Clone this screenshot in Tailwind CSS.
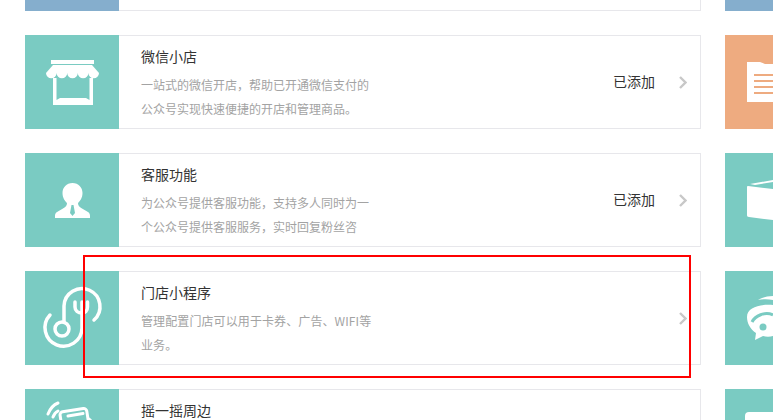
<!DOCTYPE html>
<html lang="zh-CN">
<head>
<meta charset="UTF-8" />
<title>添加功能插件</title>
<script src="https://cdn.jsdelivr.net/npm/@tailwindcss/browser@4"></script>
</head>
<body class="bg-white font-['Noto_Sans_CJK_SC','Noto_Sans',sans-serif]">
<div class="relative w-[773px] h-[420px] overflow-hidden">
  <div class="flex gap-[24px] pl-[25px] -mt-[83px] w-[1400px]">

    <!-- left column -->
    <div class="w-[676px] shrink-0 flex flex-col gap-[24px]">
      <div class="flex h-[94px]">
        <div class="w-[94px] shrink-0 bg-[#85aecd]"></div>
        <div class="flex-1 border border-l-0 border-[#e7e7eb]"></div>
      </div>

      <div class="flex h-[94px]">
        <div class="w-[94px] shrink-0 bg-[#7acbc2]">
          <svg width="94" height="94" viewBox="0 0 94 94" fill="#fff">
            <rect x="26" y="25" width="43" height="4" />
            <path d="M28 30H67L74 38A5.300 5.300 0 0 1 63.400 38A5.300 5.300 0 0 1 52.800 38A5.300 5.300 0 0 1 42.200 38A5.300 5.300 0 0 1 31.600 38A5.300 5.300 0 0 1 21 38Z" />
            <path d="M28 43H31.500V65L35 63H61L64.500 65V43H68V70H28Z" />
          </svg>
        </div>
        <div class="flex-1 flex justify-between items-center border border-l-0 border-[#e7e7eb] pl-[22px] pr-[13px]">
          <div class="self-start pt-[8px] w-[234px]">
            <h3 class="text-[14px] leading-[24px] text-[#333] font-normal">微信小店</h3>
            <p class="mt-[5px] text-[12px] leading-[24px] text-[#a3a3a3]">一站式的微信开店，帮助已开通微信支付的公众号实现快速便捷的开店和管理商品。</p>
          </div>
          <div class="flex items-center gap-[24px]">
            <span class="text-[14px] leading-[24px] text-[#333] -mt-[2px]">已添加</span>
            <svg width="8" height="13" viewBox="0 0 8 13" fill="none" stroke="#c8c8c8" stroke-width="2.4"><path d="M1 1L6.500 6.500L1 12" /></svg>
          </div>
        </div>
      </div>

      <div class="flex h-[94px]">
        <div class="w-[94px] shrink-0 bg-[#7acbc2]">
          <svg width="94" height="94" viewBox="0 0 94 94">
            <path fill="#fff" d="M47.500 30C53.500 30 57.500 34.500 57.500 40C57.500 45 55 48 53 50C53 52 54 54 57 55.500L63 59C64.500 60 65 61 65 63V65H30V63C30 61 30.500 60 32 59L38 55.500C41 54 42 52 42 50C40 48 37.500 45 37.500 40C37.500 34.500 41.500 30 47.500 30Z" />
            <path fill="#7acbc2" d="M46.500 52H48.500L50 60L47.500 63L45 60Z" />
          </svg>
        </div>
        <div class="flex-1 flex justify-between items-center border border-l-0 border-[#e7e7eb] pl-[22px] pr-[13px]">
          <div class="self-start pt-[8px] w-[234px]">
            <h3 class="text-[14px] leading-[24px] text-[#333] font-normal">客服功能</h3>
            <p class="mt-[5px] text-[12px] leading-[24px] text-[#a3a3a3]">为公众号提供客服功能，支持多人同时为一个公众号提供客服服务，实时回复粉丝咨</p>
          </div>
          <div class="flex items-center gap-[24px]">
            <span class="text-[14px] leading-[24px] text-[#333] -mt-[2px]">已添加</span>
            <svg width="8" height="13" viewBox="0 0 8 13" fill="none" stroke="#c8c8c8" stroke-width="2.4"><path d="M1 1L6.500 6.500L1 12" /></svg>
          </div>
        </div>
      </div>

      <div class="flex h-[94px]">
        <div class="w-[94px] shrink-0 bg-[#7acbc2]">
          <svg width="94" height="94" viewBox="0 0 94 94" fill="none" stroke="#fff" stroke-width="3.500" stroke-linecap="round">
            <path d="M69 49A18 18 0 1 0 39 35V50" />
            <circle cx="37" cy="58" r="7" />
            <path d="M25 44A18.500 18.500 0 1 0 57 57V31" />
            <path d="M50 31V36C50 40 53 42 57 42C60 42 62.500 40 62.500 36V31" />
          </svg>
        </div>
        <div class="flex-1 flex justify-between items-center border border-l-0 border-[#e7e7eb] pl-[22px] pr-[13px]">
          <div class="self-start pt-[8px] w-[234px]">
            <h3 class="text-[14px] leading-[24px] text-[#333] font-normal">门店小程序</h3>
            <p class="mt-[5px] text-[12px] leading-[24px] tracking-[0.1px] text-[#a3a3a3]">管理配置门店可以用于卡券、广告、WIFI等业务。</p>
          </div>
          <svg width="8" height="13" viewBox="0 0 8 13" fill="none" stroke="#c8c8c8" stroke-width="2.4"><path d="M1 1L6.500 6.500L1 12" /></svg>
        </div>
      </div>

      <div class="flex h-[94px]">
        <div class="w-[94px] shrink-0 bg-[#7acbc2]">
          <svg width="94" height="94" viewBox="0 0 94 94" fill="none" stroke="#fff" stroke-width="3" stroke-linecap="round">
            <path d="M23 25C25 20 28 16 33 14" />
            <path d="M28 28C29 25 31 23 33 22" />
            <rect x="36" y="21" width="27" height="20" rx="3" transform="rotate(-9 50 31)" />
            <path d="M43 27L58 24.500" />
            <path d="M64 30L67 33" />
          </svg>
        </div>
        <div class="flex-1 border border-l-0 border-[#e7e7eb] pl-[22px] pt-[8px]">
          <h3 class="text-[14px] leading-[24px] text-[#333] font-normal">摇一摇周边</h3>
        </div>
      </div>
    </div>

    <!-- right column, cut off by the window -->
    <div class="w-[94px] shrink-0 flex flex-col gap-[24px]">
      <div class="h-[94px] bg-[#85aecd]"></div>

      <div class="h-[94px] bg-[#eeab80]">
        <svg width="48" height="94" viewBox="0 0 48 94">
          <path fill="#fff" d="M22 27H35L40 29H48V67H22Z" />
          <path fill="#eeab80" d="M29 39H48V41H29ZM29 45H48V47H29ZM29 51H48V53H29ZM29 57H48V59H29Z" />
        </svg>
      </div>

      <div class="h-[94px] bg-[#7acbc2]">
        <svg width="48" height="94" viewBox="0 0 48 94" fill="#fff">
          <path d="M25 31L48 27V29L30 32Z" />
          <path d="M23 33L48 36V67L24 64C22.500 64 22 63 22 62V34C22 33.500 22.500 33 23 33Z" />
        </svg>
      </div>

      <div class="h-[94px] bg-[#7acbc2]">
        <svg width="48" height="94" viewBox="0 0 48 94">
          <path fill="#fff" d="M33 29C37 26.500 42 25 48 25V29C43 28 38 28 33 29Z" />
          <path fill="#fff" d="M48 34C36 33 22 36 22 46C22 52 25 58 31 62L30 69L38 65C41 66 45 66 48 65Z" />
          <path fill="none" stroke="#7acbc2" stroke-width="3" d="M27 51C30 45 40 40 48 44" />
          <circle cx="38" cy="56" r="3.500" fill="#7acbc2" />
        </svg>
      </div>

      <div class="h-[94px] bg-[#7acbc2] pl-[20px] pt-[23px]">
        <div class="w-[60px] h-[40px] bg-white rounded-[4px]"></div>
      </div>
    </div>
  </div>

  <!-- annotation drawn over the screenshot -->
  <div class="absolute left-[83px] top-[255px] w-[608px] h-[123px] border-2 border-[#ff0000]"></div>
</div>
</body>
</html>
